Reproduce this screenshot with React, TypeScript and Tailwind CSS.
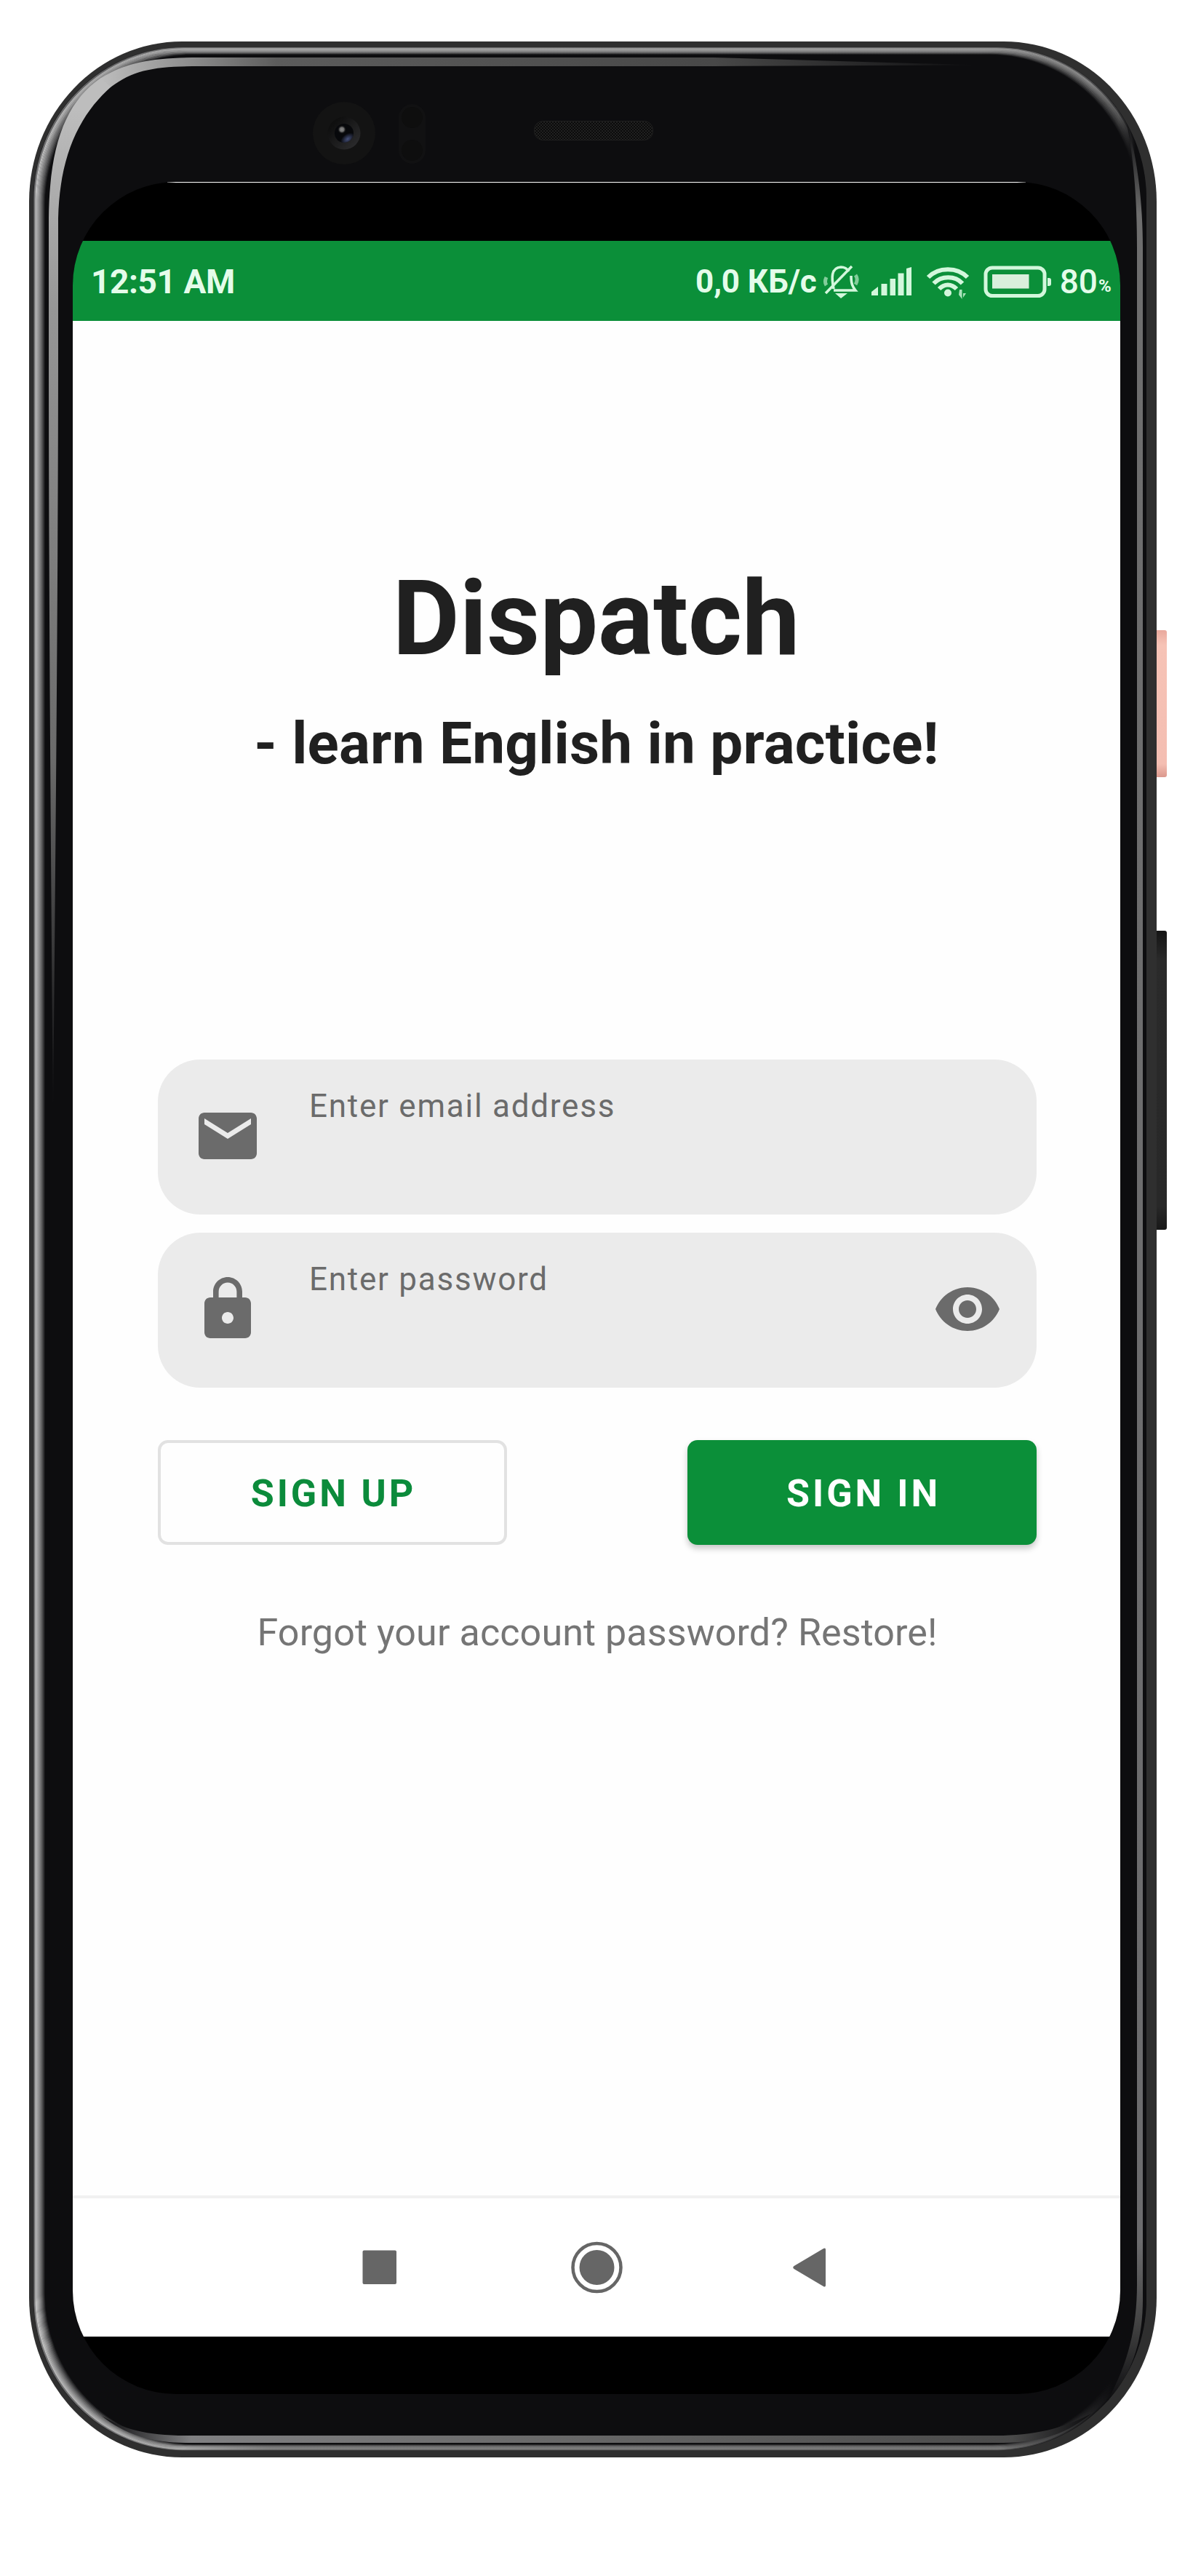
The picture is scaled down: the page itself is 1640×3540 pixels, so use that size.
import type { ReactNode } from "react";

const RINGS = Array.from({ length: 16 }, (_, i) => i);

/** Left, top and right edge of the rounded body, inset by `d` pixels. */
function rimUpper(d: number) {
  const l = 46 + d;
  const t = 65 + d * 0.62;
  const r = 1576 - d * 0.8;
  const b = 3367 - d * 0.5;
  return `M${l + 204} ${b} A204 208 0 0 1 ${l} ${b - 208} V${t + 208} A204 208 0 0 1 ${l + 204} ${t} H${r - 204} A204 208 0 0 1 ${r} ${t + 208}`;
}

/** Bottom edge of the rounded body, inset by `d` pixels. */
function rimLower(d: number) {
  const l = 46 + d;
  const r = 1576 - d * 0.8;
  const b = 3367 - d * 0.5;
  return `M${l + 204} ${b} H${r - 204} A204 208 0 0 0 ${r} ${b - 208}`;
}

function PhoneBody() {
  return (
    <svg className="absolute inset-0 h-[3540px] w-[1640px]" viewBox="0 0 1640 3540" fill="none">
      <defs>
        <linearGradient id="rim" gradientUnits="userSpaceOnUse" x1="40" y1="0" x2="1576" y2="0">
          <stop offset="0" stopColor="#c4c4c4" />
          <stop offset="0.12" stopColor="#a8a8a8" />
          <stop offset="0.85" stopColor="#9a9a9a" />
          <stop offset="0.95" stopColor="#8a8a8a" />
          <stop offset="0.975" stopColor="#5a5a5a" />
          <stop offset="0.99" stopColor="#0d0d0f" />
        </linearGradient>
        <linearGradient id="rimLower" gradientUnits="userSpaceOnUse" x1="240" y1="0" x2="1530" y2="0">
          <stop offset="0" stopColor="#a8a8a8" />
          <stop offset="0.1" stopColor="#808080" />
          <stop offset="0.88" stopColor="#777" />
          <stop offset="1" stopColor="#0d0d0f" />
        </linearGradient>
        <linearGradient id="glossSide" gradientUnits="userSpaceOnUse" x1="0" y1="150" x2="0" y2="1530">
          <stop offset="0" stopColor="#bdbdbd" />
          <stop offset="0.2" stopColor="#969696" />
          <stop offset="0.65" stopColor="#6a6a6a" />
          <stop offset="1" stopColor="#0d0d0f" />
        </linearGradient>
        <linearGradient id="glossTop" gradientUnits="userSpaceOnUse" x1="139" y1="0" x2="1345" y2="0">
          <stop offset="0" stopColor="#bdbdbd" />
          <stop offset="0.1" stopColor="#8e8e8e" />
          <stop offset="0.2" stopColor="#5c5c5c" />
          <stop offset="0.7" stopColor="#484848" />
          <stop offset="1" stopColor="#0d0d0f" />
        </linearGradient>
        <linearGradient id="glossBottom" gradientUnits="userSpaceOnUse" x1="140" y1="0" x2="1500" y2="0">
          <stop offset="0" stopColor="#0d0d0f" />
          <stop offset="0.09" stopColor="#808082" />
          <stop offset="0.5" stopColor="#666" />
          <stop offset="0.92" stopColor="#4a4a4a" />
          <stop offset="1" stopColor="#0d0d0f" />
        </linearGradient>
        <linearGradient id="glossRight" gradientUnits="userSpaceOnUse" x1="0" y1="170" x2="0" y2="3300">
          <stop offset="0" stopColor="#0d0d0f" />
          <stop offset="0.04" stopColor="#6e6e6e" />
          <stop offset="0.93" stopColor="#6c6c6e" />
          <stop offset="0.965" stopColor="#444" />
          <stop offset="1" stopColor="#0d0d0f" />
        </linearGradient>
        <linearGradient id="power" x1="0" y1="0" x2="0" y2="1">
          <stop offset="0" stopColor="#e9a99d" />
          <stop offset="0.1" stopColor="#f6c3b6" />
          <stop offset="0.91" stopColor="#f4beb2" />
          <stop offset="1" stopColor="#db988d" />
        </linearGradient>
        <linearGradient id="volume" x1="0" y1="0" x2="0" y2="1">
          <stop offset="0" stopColor="#151515" />
          <stop offset="0.1" stopColor="#2a2a2a" />
          <stop offset="0.92" stopColor="#282828" />
          <stop offset="1" stopColor="#181818" />
        </linearGradient>
        <linearGradient id="lens" x1="0" y1="0" x2="1" y2="1">
          <stop offset="0.2" stopColor="#0f0f0f" />
          <stop offset="1" stopColor="#303032" />
        </linearGradient>
        <radialGradient id="glint">
          <stop offset="0" stopColor="#8a8a8a" />
          <stop offset="0.5" stopColor="#6c6c6c" />
          <stop offset="1" stopColor="#080808" stopOpacity="0" />
        </radialGradient>
        <radialGradient id="blueGlint">
          <stop offset="0" stopColor="#46517c" />
          <stop offset="1" stopColor="#46517c" stopOpacity="0" />
        </radialGradient>
        <clipPath id="lensClip">
          <circle cx="473" cy="183" r="13" />
        </clipPath>
        <pattern id="mesh" width="4" height="4" patternUnits="userSpaceOnUse">
          <rect width="4" height="4" fill="#0b0b0b" />
          <path d="M0 0L4 4M4 0L0 4" stroke="#262626" strokeWidth="0.8" />
        </pattern>
      </defs>

      <rect x="1585" y="866" width="19" height="202" rx="3" fill="url(#power)" />
      <rect x="1585" y="1279" width="19" height="411" rx="3" fill="url(#volume)" />

      <rect x="40" y="57" width="1550" height="3320" rx="210" ry="220" fill="#2f2f2f" />
      <rect x="46" y="65" width="1530" height="3302" rx="204" ry="208" fill="#0d0d0f" />

      {RINGS.map((i) => {
        const opacity = i < 2 ? 0.5 : Math.max(0, 1 - (i - 2) / 13);
        return (
          <g key={i} strokeWidth="1.4" strokeOpacity={opacity}>
            <path d={rimLower(1 + i)} stroke="url(#rimLower)" />
            <path d={rimUpper(1 + i)} stroke="url(#rim)" />
          </g>
        );
      })}

      <path d="M67 480 V300 C68 200 90 140 139 107 L153 119 C112 155 82 210 80 300 V480 C80 800 76 1200 73 1530 C70 1200 67 800 67 480Z" fill="url(#glossSide)" />
      <path d="M138.500 107.500 C175 84 215 79 275 79 H980 L1345 89.500 L980 91 H275 C215 91 185 95 152.500 119.500Z" fill="url(#glossTop)" />
      <path d="M140 3320 C170 3338 200 3347 255 3347 H1370 C1420 3347 1460 3338 1500 3317 C1460 3350 1420 3357 1370 3357 H255 C210 3357 170 3345 140 3320Z" fill="url(#glossBottom)" />
      <path d="M1549 170 C1561 205 1571 270 1571 340 V3160 C1571 3210 1560 3260 1522 3300 C1550 3250 1563 3200 1563 3140 V340 C1563 270 1558 215 1549 170Z" fill="url(#glossRight)" />

      <circle cx="473" cy="183" r="43" fill="#131313" />
      <circle cx="473" cy="183" r="22.500" fill="url(#lens)" />
      <circle cx="473" cy="183" r="13" fill="#07080b" />
      <g clipPath="url(#lensClip)">
        <ellipse cx="478" cy="191" rx="11" ry="7" transform="rotate(-35 478 191)" fill="url(#blueGlint)" />
        <circle cx="470" cy="178" r="6" fill="url(#glint)" />
      </g>
      <rect x="548" y="143" width="37" height="82" rx="18.500" fill="#111112" />
      <circle cx="566.500" cy="161.500" r="14.500" fill="#0e0e0e" />
      <circle cx="566.500" cy="206.500" r="14.500" fill="#0e0e0e" />
      <rect x="734.500" y="166.500" width="163" height="26" rx="12" fill="url(#mesh)" stroke="#1f1f1f" />
    </svg>
  );
}

function StatusIcons() {
  return (
    <svg className="h-[60px] w-[314px]" viewBox="1132 355 314 60" fill="none" stroke="#d3f7dc">
      {/* muted bell */}
      <g strokeWidth="3.600">
        <path d="M1147 395C1144 380 1143 366 1157 365C1163 365 1166 368 1168 371M1171 377C1171 388 1173 392 1177 397H1147" />
        <path d="M1136 401L1172 364" />
        <path d="M1137 379C1135 383 1135 387 1137 390M1177 376C1180 380 1180 384 1177 389" strokeWidth="5" opacity=".6" />
      </g>
      <path d="M1149 401H1166L1157 408Z" fill="#d3f7dc" stroke="none" />
      {/* signal */}
      <path d="M1199 404V399L1208 392V404ZM1212.500 404V388H1220.500V404ZM1224.500 404V381H1232V404ZM1235.500 404V373.500H1243.500V404ZM1247 404V367L1254 365V404Z" fill="#d3f7dc" stroke="none" />
      {/* wifi */}
      <g strokeWidth="6">
        <path d="M1277 379C1291 364.500 1317 364.500 1331 379" />
        <path d="M1284.500 387.500C1295 376.500 1314 376.500 1324 387.500" />
        <path d="M1292 395C1299 387.500 1309 387.500 1316 395" />
      </g>
      <circle cx="1304" cy="400.500" r="5" fill="#d3f7dc" stroke="none" />
      <path d="M1320 396H1323.500V409L1319 403ZM1325 401H1329L1325 407Z" fill="#d3f7dc" stroke="none" opacity=".8" />
      {/* battery */}
      <rect x="1356" y="366" width="81" height="38.500" rx="9" strokeWidth="5" />
      <rect x="1365" y="375" width="50.500" height="19.500" fill="#d9efdc" stroke="none" />
      <path d="M1441 380H1443Q1446 380 1446 383V388Q1446 391 1443 391H1441Z" fill="#d3f7dc" stroke="none" />
    </svg>
  );
}

function StatusBar() {
  return (
    <header className="flex h-[110px] items-center bg-[#0b8f39] pt-0.5 pr-2.5 pl-[25px] text-[#e4fcea]">
      <span className="text-[46px] leading-[50px] font-bold tracking-[-0.4px] whitespace-nowrap">12:51 AM</span>
      <div className="ml-auto flex items-center">
        <span className="text-[44px] leading-[50px] font-bold tracking-[-0.1px] whitespace-nowrap">0,0 КБ/с</span>
        <span className="ml-[8px] flex">
          <StatusIcons />
        </span>
        <span className="ml-[12px] text-[46px] leading-[50px] font-medium">80</span>
        <span className="mt-3 ml-px w-5 text-[24px] leading-[26px] font-bold">%</span>
      </div>
    </header>
  );
}

function Field({ icon, label, trailing }: { icon: ReactNode; label: string; trailing?: ReactNode }) {
  return (
    <div className="flex h-[213px] items-center rounded-[58px] bg-[#ebebeb] pr-[47px] pb-[3px] pl-[48px] text-[#6b6b6b]">
      <span className="flex size-24 items-center justify-center">{icon}</span>
      <span className="mt-[39px] ml-[64px] flex-1 self-start text-[44px] leading-[50px] tracking-[1.75px] whitespace-nowrap">
        {label}
      </span>
      {trailing}
    </div>
  );
}

const MailIcon = () => (
  <svg viewBox="0 0 24 24" className="size-24" fill="currentColor">
    <path d="M20 4H4c-1.100 0-1.990.9-1.990 2L2 18c0 1.100.9 2 2 2h16c1.100 0 2-.9 2-2V6c0-1.100-.9-2-2-2zm0 4l-8 5-8-5V6l8 5 8-5v2z" />
  </svg>
);

const LockIcon = () => (
  <svg viewBox="0 0 24 24" className="size-24" fill="currentColor">
    <path d="M18 8h-1V6c0-2.760-2.240-5-5-5S7 3.240 7 6v2H6c-1.100 0-2 .9-2 2v10c0 1.100.9 2 2 2h12c1.100 0 2-.9 2-2V10c0-1.100-.9-2-2-2zm-6 9c-1.100 0-2-.9-2-2s.9-2 2-2 2 .9 2 2-.9 2-2 2zm3.100-9H8.900V6c0-1.710 1.390-3.100 3.100-3.100 1.710 0 3.100 1.390 3.100 3.100v2z" />
  </svg>
);

const EyeIcon = () => (
  <svg viewBox="0 0 24 24" className="size-24" fill="currentColor">
    <path d="M12 4.500C7 4.500 2.730 7.610 1 12c1.730 4.390 6 7.500 11 7.500s9.270-3.110 11-7.500c-1.730-4.390-6-7.500-11-7.500zM12 17c-2.760 0-5-2.240-5-5s2.240-5 5-5 5 2.240 5 5-2.240 5-5 5zm0-8c-1.660 0-3 1.340-3 3s1.340 3 3 3 3-1.340 3-3-1.340-3-3-3z" />
  </svg>
);

function NavBar() {
  return (
    <nav className="h-[194px] border-t-[4px] border-[#f1f1f1] bg-white">
      <svg className="h-[190px] w-[1440px]" viewBox="100 3021 1440 190" fill="#666">
        <rect x="498.500" y="3092.500" width="46.500" height="46.500" rx="2" />
        <circle cx="820.500" cy="3116" r="24" />
        <circle cx="820.500" cy="3116" r="33" fill="none" stroke="#666" strokeWidth="4.500" />
        <path d="M1091.500 3114L1132 3090Q1135 3088.500 1135 3091.500V3140.500Q1135 3143.500 1132 3142L1091.500 3118Q1089 3116 1091.500 3114Z" />
      </svg>
    </nav>
  );
}

export default function App() {
  return (
    <div className="relative h-[3540px] w-[1640px] overflow-hidden bg-white font-[Roboto,sans-serif]">
      <PhoneBody />
      <div className="relative px-[100px] pt-[250px]">
        <div className="flex h-[3040px] flex-col overflow-hidden rounded-[142px] bg-black pb-[79px]">
          <div className="mx-[130px] h-px shrink-0 bg-white" />
          <div className="h-20 shrink-0" />
          <StatusBar />
          <main className="flex flex-1 flex-col bg-[#fefefe] pt-[326px] pr-[115px] pl-[117px]">
            <h1 className="pr-[3px] text-center text-[142px] leading-[168px] font-bold whitespace-nowrap text-[#202020]">Dispatch</h1>
            <h2 className="mt-[40px] pr-[2px] text-center text-[80px] leading-[94px] font-bold tracking-[0.25px] whitespace-nowrap text-[#202020]">
              - learn English in practice!
            </h2>
            <div className="mt-[387px] flex flex-col gap-[25px]">
              <Field icon={<MailIcon />} label="Enter email address" />
              <Field icon={<LockIcon />} label="Enter password" trailing={<EyeIcon />} />
            </div>
            <div className="mt-[72px] flex justify-between">
              <button className="h-[144px] w-[480px] rounded-[14px] border-[4px] border-[#e2e2e2] pt-[3px] pl-[3px] text-[52px] leading-[60px] font-bold tracking-[3.900px] text-[#0b8b3b]">
                SIGN UP
              </button>
              <button className="h-[144px] w-[480px] rounded-[14px] bg-[#0b8f39] pt-[3px] pl-[4px] text-[52px] leading-[60px] font-bold tracking-[4px] text-white shadow-[0_5px_8px_rgba(0,0,0,0.22)]">
                SIGN IN
              </button>
            </div>
            <p className="mt-[90px] text-center text-[52px] leading-[62px] tracking-[0.1px] whitespace-nowrap text-[#757575]">
              Forgot your account password? Restore!
            </p>
          </main>
          <NavBar />
        </div>
      </div>
    </div>
  );
}
